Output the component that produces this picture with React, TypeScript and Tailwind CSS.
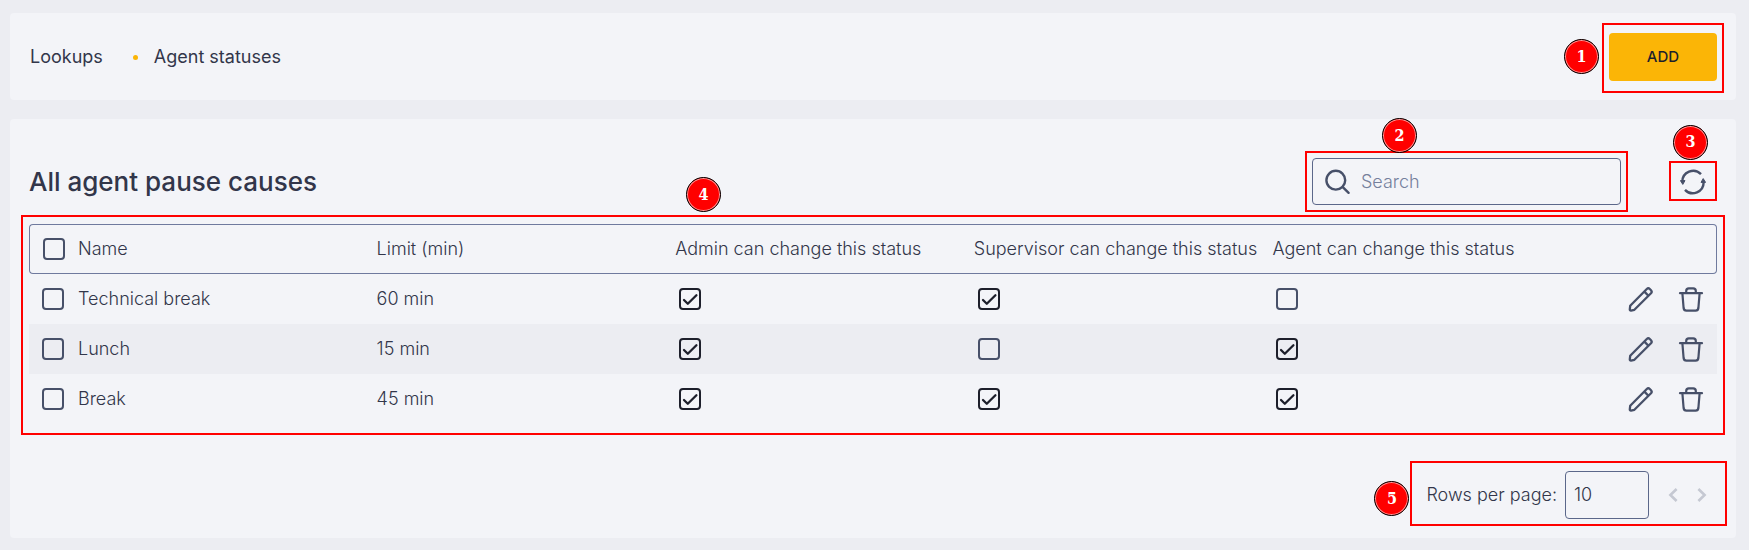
import { ChangeEvent, FC, ReactNode, useMemo, useState } from "react"

interface PauseCause
{
    id: number
    name: string
    limit: number
    admin: boolean
    supervisor: boolean
    agent: boolean
}

const CAUSES: PauseCause[] = [
    { id: 1, name: "Technical break", limit: 60, admin: true, supervisor: true, agent: false },
    { id: 2, name: "Lunch", limit: 15, admin: true, supervisor: false, agent: true },
    { id: 3, name: "Break", limit: 45, admin: true, supervisor: true, agent: true }
]

const COLUMNS = [ "Name", "Limit (min)", "Admin can change this status", "Supervisor can change this status", "Agent can change this status" ]

// Red frame over a region of the page
const Frame: FC<{ className: string }> = ({ className }) => (
    <span aria-hidden="true" className={ `pointer-events-none absolute border-2 border-[#ff0000] ${ className }` } />
)

// Numbered marker next to a frame
const Marker: FC<{ className: string, children: ReactNode }> = ({ className, children }) => (
    <span className={ `absolute z-10 flex size-[35px] items-center justify-center rounded-full border border-black bg-[#ff0000] font-['DejaVu_Serif_Condensed','DejaVu_Serif',serif] text-base font-bold text-white ring-1 ring-white/60 ring-inset ${ className }` }>
        { children }
    </span>
)

const CheckBox: FC<{ label: string, checked?: boolean, onChange?: () => void }> = ({ label, checked, onChange }) => (
    <span className="relative block size-[22px]">
        <input type="checkbox" aria-label={ label } checked={ checked } onChange={ onChange } readOnly={ !onChange } className="peer block size-[22px] appearance-none rounded border-2 border-[#475069] checked:border-[#1d1f2b]" />
        <svg viewBox="0 0 22 22" fill="none" stroke="#1d1f2b" strokeWidth="2.3" strokeLinecap="round" strokeLinejoin="round" className="pointer-events-none absolute inset-0 hidden size-[22px] peer-checked:block">
            <path d="M5 12 L8.8 15.8 L17.4 7.2" />
        </svg>
    </span>
)

const PencilIcon = () => (
    <svg viewBox="0 0 26 26" fill="none" stroke="#475069" strokeWidth="2.3" strokeLinejoin="round" className="size-[26px]">
        <path d="M2.2 19.8 L18.8 3 Q20.3 1.6 21.8 3 L23 4.2 Q24.4 5.7 23 7.2 L6.4 23.8 L2.9 24.6 Q1.7 24.6 1.8 23.4 Z" />
        <path d="M16.4 5.6 L20.4 9.8" />
    </svg>
)

const TrashIcon = () => (
    <svg viewBox="0 0 26 26" fill="none" stroke="#475069" strokeWidth="2.2" strokeLinecap="round" strokeLinejoin="round" className="size-[26px]">
        <path d="M2 7.2 H24" />
        <path d="M8.2 7 V5 Q8.2 2.4 10.8 2.4 H15.2 Q17.8 2.4 17.8 5 V7" />
        <path d="M4.4 7.4 L5.6 22 Q5.9 24.6 8.4 24.6 H17.6 Q20.1 24.6 20.4 22 L21.6 7.4" />
    </svg>
)

const RefreshIcon = () => (
    <svg viewBox="0 0 26 26" fill="none" stroke="#475069" strokeWidth="2.4" className="size-[26px]">
        <path d="M2.4 13 A10.8 10.8 0 0 1 21 5.2" />
        <path d="M23.6 13 A10.8 10.8 0 0 1 5 20.8" />
        <path d="M0.4 11.6 L5 11.6 L2.8 15.4 Z M21 13.4 L25.6 13.4 L23.2 9.6 Z" fill="#475069" strokeWidth="1" />
    </svg>
)

const SearchIcon = () => (
    <svg viewBox="0 0 26 26" fill="none" stroke="#475069" strokeWidth="2.4" strokeLinecap="round" className="size-[26px] shrink-0">
        <circle cx="10.8" cy="11.2" r="9.4" />
        <path d="M17.8 18.2 L23.6 23.8" />
    </svg>
)

const Chevron: FC<{ d: string }> = ({ d }) => (
    <svg viewBox="0 0 10 14" fill="none" stroke="#c5c8d2" strokeWidth="2.6" className="h-3.5 w-2.5">
        <path d={ d } />
    </svg>
)

export default function App()
{
    const [ causes, setCauses ] = useState<PauseCause[]>(CAUSES)
    const [ selected, setSelected ] = useState<number[]>([])
    const [ searchText, setSearchText ] = useState<string>("")
    const [ pageSize, setPageSize ] = useState<string>("10")

    const rows = useMemo(() => causes.filter(cause => cause.name.toLowerCase().includes(searchText.toLowerCase())), [ causes, searchText ])

    const allSelected = (rows.length > 0) && rows.every(row => selected.includes(row.id))

    const toggle = (id: number) => setSelected(prev => prev.includes(id) ? prev.filter(value => value !== id) : [ ...prev, id ])

    return (
        <div className="flex min-h-screen flex-col gap-[19px] bg-[#ecedf2] pt-[13px] pr-[13px] pb-3 pl-2.5 font-[Inter,sans-serif] text-lg font-light text-[#32364a]">
            <header className="flex items-center justify-between rounded bg-[#f3f4f8] pt-5 pr-[19px] pb-[19px] pl-5 font-normal">
                <nav className="flex items-center">
                    <a href="#lookups">Lookups</a>
                    <span className="mr-4 ml-[30px] size-[5px] rounded-full bg-[#fbb506]" />
                    <a href="#statuses">Agent statuses</a>
                </nav>
                <div className="relative">
                    <button type="button" className="block h-12 w-[108px] rounded bg-[#fbb506] text-[15px] font-medium text-[#1d1f2b]">ADD</button>
                    <Frame className="-inset-x-[7px] -top-2.5 -bottom-3" />
                    <Marker className="top-1.5 -left-[45px]">1</Marker>
                </div>
            </header>

            <main className="grow rounded bg-[#f3f4f8] px-[19px] pt-[39px] pb-[19px]">
                <div className="flex items-center justify-between">
                    <h1 className="text-[26px] leading-9 font-medium">All agent pause causes</h1>
                    <div className="flex items-center gap-[59px] pr-[11px]">
                        <div className="relative w-[309px]">
                            <label className="flex h-[47px] items-center gap-2.5 rounded border border-[#5b678a] px-3">
                                <SearchIcon />
                                <input type="search" aria-label="Search" placeholder="Search" value={ searchText } onChange={ event => setSearchText(event.target.value) } className="w-full min-w-0 bg-transparent outline-none placeholder:text-[#75809c]" />
                            </label>
                            <Frame className="-inset-[7px]" />
                            <Marker className="-top-10 left-[70px]">2</Marker>
                        </div>
                        <div className="relative">
                            <button type="button" aria-label="Refresh" onClick={ () => setCauses(CAUSES) } className="block"><RefreshIcon /></button>
                            <Frame className="-inset-x-[11px] -top-2 -bottom-1.5" />
                            <Marker className="-top-11 -left-[7px]">3</Marker>
                        </div>
                    </div>
                </div>

                <div className="relative mt-[19px]">
                    <table className="w-full table-fixed border-separate border-spacing-0 text-left whitespace-nowrap">
                        <colgroup>
                            <col className="w-[49px]" />
                            { COLUMNS.map(column => <col key={ column } />) }
                            <col className="w-[146px]" />
                        </colgroup>
                        <thead>
                            <tr className="h-[50px]">
                                <th className="rounded-l border-y border-l border-[#6f7a9e] p-0 pl-[13px]">
                                    <CheckBox label="Select all" checked={ allSelected } onChange={ () => setSelected(allSelected ? [] : rows.map(row => row.id)) } />
                                </th>
                                { COLUMNS.map(column => <th key={ column } className="border-y border-[#6f7a9e] p-0 font-light">{ column }</th>) }
                                <th className="rounded-r border-y border-r border-[#6f7a9e] p-0" />
                            </tr>
                        </thead>
                        <tbody>
                            { rows.map(row => (
                                <tr key={ row.id } className="h-[50px] even:bg-[#ecedf2]">
                                    <td className="p-0 pl-[13px]"><CheckBox label={ `Select ${ row.name }` } checked={ selected.includes(row.id) } onChange={ () => toggle(row.id) } /></td>
                                    <td className="p-0">{ row.name }</td>
                                    <td className="p-0">{ row.limit } min</td>
                                    <td className="p-0 pl-1"><CheckBox label="Admin can change" checked={ row.admin } /></td>
                                    <td className="p-0 pl-1"><CheckBox label="Supervisor can change" checked={ row.supervisor } /></td>
                                    <td className="p-0 pl-1"><CheckBox label="Agent can change" checked={ row.agent } /></td>
                                    <td className="p-0">
                                        <div className="flex justify-end gap-6 pr-[13px]">
                                            <button type="button" aria-label={ `Edit ${ row.name }` }><PencilIcon /></button>
                                            <button type="button" aria-label={ `Delete ${ row.name }` } onClick={ () => setCauses(prev => prev.filter(value => value.id !== row.id)) }><TrashIcon /></button>
                                        </div>
                                    </td>
                                </tr>
                            )) }
                        </tbody>
                    </table>
                    <Frame className="-inset-x-2 -top-[9px] -bottom-[11px]" />
                    <Marker className="-top-[47px] left-[657px]">4</Marker>
                </div>

                <div className="mt-[47px] flex justify-end pr-2.5">
                    <div className="relative flex items-center">
                        <label htmlFor="page-size" className="mr-2">Rows per page:</label>
                        <select id="page-size" value={ pageSize } onChange={ (event: ChangeEvent<HTMLSelectElement>) => setPageSize(event.target.value) } className="h-12 w-[84px] appearance-none rounded border border-[#5b678a] px-2">
                            <option value="10">10</option>
                            <option value="25">25</option>
                            <option value="50">50</option>
                        </select>
                        <div className="ml-[19px] flex gap-[19px]">
                            <button type="button" aria-label="Previous page" disabled><Chevron d="M8.6 1 L2.4 7 L8.6 13" /></button>
                            <button type="button" aria-label="Next page" disabled><Chevron d="M1.4 1 L7.6 7 L1.4 13" /></button>
                        </div>
                        <Frame className="-top-2.5 -right-5 -bottom-[7px] -left-4" />
                        <Marker className="top-2.5 -left-[52px]">5</Marker>
                    </div>
                </div>
            </main>
        </div>
    )
}
